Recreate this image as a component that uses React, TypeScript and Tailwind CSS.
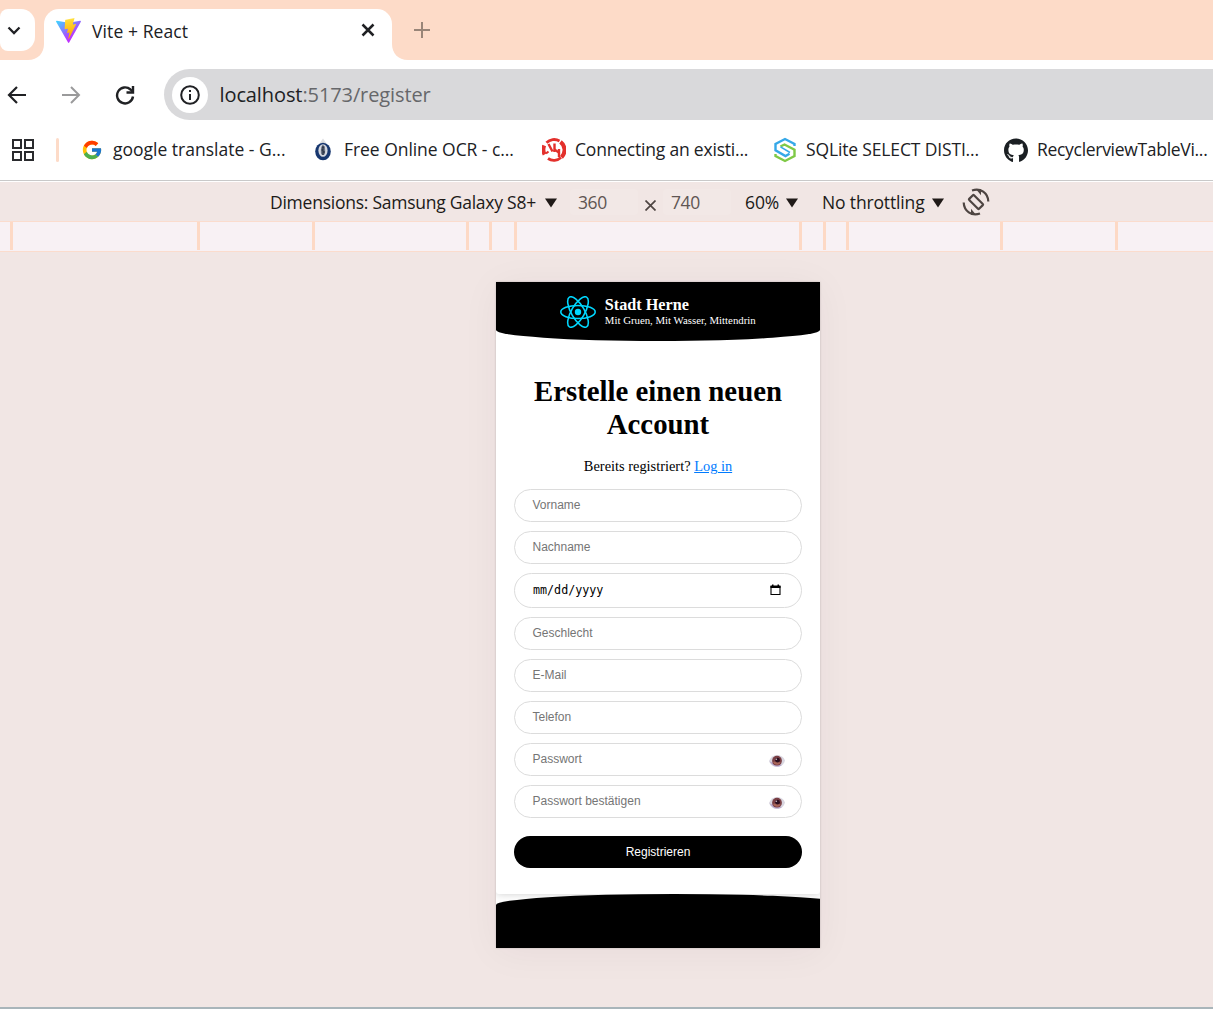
import React from "react";
import { FcGoogle } from "react-icons/fc";
import { FaGithub } from "react-icons/fa";

function ViteLogo() {
  return (
    <svg width="25" height="25" viewBox="0 0 256 257" className="block">
      <defs>
        <linearGradient id="va" x1="-.83%" x2="57.64%" y1="7.65%" y2="78.41%">
          <stop offset="0%" stopColor="#41D1FF" />
          <stop offset="100%" stopColor="#BD34FE" />
        </linearGradient>
        <linearGradient id="vb" x1="43.38%" x2="50.32%" y1="2.24%" y2="89.03%">
          <stop offset="0%" stopColor="#FFEA83" />
          <stop offset="8.33%" stopColor="#FFDD35" />
          <stop offset="100%" stopColor="#FFA800" />
        </linearGradient>
      </defs>
      <path fill="url(#va)" d="M255.153 37.938L134.897 252.976c-2.483 4.44-8.862 4.466-11.382.048L.875 37.958c-2.746-4.814 1.371-10.646 6.827-9.67l120.385 21.517a6.537 6.537 0 0 0 2.322-.004l117.867-21.483c5.438-.991 9.574 4.796 6.877 9.62Z" />
      <path fill="url(#vb)" d="M185.432.063L96.44 17.501a3.268 3.268 0 0 0-2.634 3.014l-5.474 92.456a3.268 3.268 0 0 0 3.997 3.378l24.777-5.718c2.318-.535 4.413 1.507 3.936 3.838l-7.361 36.047c-.495 2.426 1.782 4.5 4.151 3.78l15.304-4.649c2.372-.72 4.652 1.36 4.15 3.788l-11.698 56.621c-.732 3.542 3.979 5.473 5.943 2.437l1.313-2.028l72.516-144.72c1.215-2.423-.88-5.186-3.54-4.672l-25.505 4.922c-2.396.462-4.435-1.77-3.759-4.114l16.646-57.705c.677-2.35-1.37-4.583-3.769-4.113Z" />
    </svg>
  );
}

function ReactLogo() {
  return (
    <svg width="36" height="32" viewBox="-11.5 -10.23 23 20.46" className="block">
      <circle r="2.05" fill="#00d8ff" />
      <g fill="none" stroke="#00d8ff" strokeWidth="1">
        <ellipse rx="11" ry="4.2" />
        <ellipse rx="11" ry="4.2" transform="rotate(60)" />
        <ellipse rx="11" ry="4.2" transform="rotate(120)" />
      </g>
    </svg>
  );
}

function CrestIcon() {
  return (
    <svg width="24" height="24" viewBox="0 0 24 24" className="block">
      <path d="M12 .5l3.500 5h-7z" fill="#dfe0e2" />
      <ellipse cx="12" cy="13.500" rx="7.800" ry="8.800" fill="#17376f" />
      <ellipse cx="12" cy="12.500" rx="4.600" ry="6.300" fill="#d5d8df" />
      <path d="M12 6.500c-2 2-2.400 4-2 9 1 2 3 2 4 0 .6-4 0-7-2-9z" fill="#6d7586" />
      <path d="M11 9h2.500M10.500 12h2M12 14h2M12 9v8" stroke="#20283b" strokeWidth="1.100" />
    </svg>
  );
}

function RedIcon() {
  return (
    <svg width="24" height="24" viewBox="0 0 24 24" className="block" fill="none" stroke="#e3302c">
      <path d="M4.500 4.800A10.400 10.400 0 0 1 17.500 3" strokeWidth="2.800" />
      <path d="M18.500 3.800A10.300 10.300 0 0 1 19.500 19.300" strokeWidth="4" />
      <path d="M19 19.500A10.400 10.400 0 0 1 6 20.500" strokeWidth="2.800" />
      <path d="M2.200 7.500A10.600 10.600 0 0 0 2.600 16.500" strokeWidth="4" />
      <path d="M6.500 6l4 7.500M12.500 5.500v8.500M17 11v8" strokeWidth="2.400" />
      <path d="M12.500 11.500l5 3.500M4 15.500l2.500-2" strokeWidth="2.200" />
    </svg>
  );
}

function SqliteTutorialIcon() {
  return (
    <svg width="24" height="26" viewBox="0 0 24 26" className="block" fill="none" strokeWidth="2.400">
      <path d="M21.500 9V7L12 2 2.500 7v6.200L12.500 19l4-2.300" stroke="#35a8e8" />
      <path d="M2.500 17v2l9.500 5 9.500-5v-6.200L11.500 7.500l-4 2" stroke="#7fc946" />
      <path d="M7.500 9.800l9.500 5.700" stroke="#35a8e8" strokeWidth="1.500" />
    </svg>
  );
}

function EyeIcon() {
  return (
    <svg width="16" height="12" viewBox="0 0 16 12" className="block">
      <path d="M0 6C1.500 2 4.500 0 8 0s6.700 1.900 8 5.500C14.800 10 11.500 12 8 12S1.500 10 0 6z" fill="#d9d6e0" />
      <path d="M.6 6.500c1.800 3 4.400 5 7.400 5 2 0 3.500-.6 4.800-1.600L5 8z" fill="#b7a6cb" />
      <circle cx="8" cy="5.700" r="4.900" fill="#7a3f44" />
      <path d="M4 7a4.400 4.400 0 0 0 7.800.8L8 6z" fill="#a9665a" />
      <circle cx="8.500" cy="5.200" r="2.400" fill="#2d0f20" />
      <circle cx="7.300" cy="4.200" r=".8" fill="#cfc0c8" />
    </svg>
  );
}

function RotateIcon() {
  return (
    <svg width="28" height="28" viewBox="0 0 28 28" className="ml-[18px] block shrink-0" fill="none" stroke="#4e4542" strokeWidth="2.200">
      <rect x="10.600" y="7" width="6.800" height="14" rx=".8" transform="rotate(-45 14 14)" />
      <path d="M10 2.500C18.500-.5 26 5 26.300 13.500" />
      <path d="M18 25.500C9.500 28.500 2 23 1.700 14.500" />
      <path d="M14 1.200h5v6z M14 26.800H9v-6z" fill="#4e4542" stroke="none" />
    </svg>
  );
}

function Bookmark({ icon, label, className, textClass }: { icon: React.ReactNode; label: string; className: string; textClass: string }) {
  return (
    <div className={`flex h-full shrink-0 items-center whitespace-nowrap text-[17.5px] text-[#202124] ${className}`}>
      <span className="flex w-6 shrink-0 justify-center">{icon}</span>
      <span className={`-mt-px ${textClass}`}>{label}</span>
    </div>
  );
}

function Field({ label, eye }: { label: string; eye?: boolean }) {
  return (
    <div className="flex h-[33px] items-center justify-between rounded-full border border-[#dcdcdc] pr-4 pl-[17.5px] font-['Liberation_Sans',sans-serif] text-[12px] text-[#757575]">
      <span className="-mt-px">{label}</span>
      {eye && <span className="mt-[2px]"><EyeIcon /></span>}
    </div>
  );
}

function Caret() {
  return (
    <svg width="12" height="10" viewBox="0 0 12 10" className="mt-[2px] block shrink-0">
      <path d="M0 .5h12L6 9.500z" fill="#201a18" />
    </svg>
  );
}

const segments = [13, 187, 115, 154, 23, 25, 285, 24, 23, 154, 115];

export default function App() {
  return (
    <div className="flex h-[1009px] w-[1213px] flex-col overflow-hidden bg-white font-['Open_Sans',sans-serif]">
      {/* Tab strip */}
      <div className="flex h-[60px] shrink-0 items-start bg-[#fddbc8]">
        <div className="mt-[9px] flex h-[42px] w-[35px] items-center rounded-r-[14px] rounded-l-[8px] bg-white pl-[7px]">
          <svg width="14" height="14" viewBox="0 0 14 14" fill="none" stroke="#202124" strokeWidth="2.300"><path d="M1.500 4.500L7 10l5.500-5.500" /></svg>
        </div>
        <svg width="16" height="60" viewBox="0 0 16 60" className="-ml-[7px] block"><path d="M16 44v16H0C10 60 16 53 16 44z" fill="#fff" /></svg>
        <div className="mt-[9px] flex h-[51px] w-[348px] items-center rounded-t-[15px] bg-white pr-[17px] pl-[11.500px]">
          <div className="-mt-[9px]"><ViteLogo /></div>
          <span className="-mt-[6px] ml-[11.500px] text-[17.5px] tracking-[0.1px] whitespace-nowrap text-[#202124]">Vite + React</span>
          <svg width="14" height="14" viewBox="0 0 14 14" className="-mt-[9px] ml-auto" stroke="#202124" strokeWidth="2.500"><path d="M1.500 1.500l11 11M12.500 1.500l-11 11" /></svg>
        </div>
        <svg width="16" height="60" viewBox="0 0 16 60" className="block"><path d="M0 44v16h16C6 60 0 53 0 44z" fill="#fff" /></svg>
        <svg width="16" height="16" viewBox="0 0 16 16" className="mt-[22px] ml-[6px]" stroke="#998578" strokeWidth="2"><path d="M8 0v16M0 8h16" /></svg>
      </div>

      {/* Address bar */}
      <div className="flex h-[60px] shrink-0 items-end">
        <div className="flex h-[51px] w-[164px] shrink-0 items-center">
          <svg width="20" height="20" viewBox="0 0 20 20" className="ml-[7px]" fill="none" stroke="#202124" strokeWidth="2.200"><path d="M19 10H2.500M10 2l-8 8 8 8" /></svg>
          <svg width="20" height="20" viewBox="0 0 20 20" className="ml-[34px]" fill="none" stroke="#9a9a9b" strokeWidth="2"><path d="M1 10h16.500M10 2l8 8-8 8" /></svg>
          <svg width="20" height="20" viewBox="0 0 20 20" className="ml-[34px]" fill="none" stroke="#202124" strokeWidth="2.400"><path d="M18 11.500a8 8 0 1 1-2.500-7L18 7" /><path d="M18 1v6.500h-6.500" /></svg>
        </div>
        <div className="flex h-[51px] flex-1 items-center rounded-l-full bg-[#d9d9db] pl-[7.500px]">
          <div className="flex size-[36px] items-center justify-center rounded-full bg-white">
            <svg width="20" height="20" viewBox="0 0 20 20" fill="none" stroke="#202124" strokeWidth="2"><circle cx="10" cy="10" r="8.800" /><path d="M10 9v6M10 5v2" /></svg>
          </div>
          <span className="ml-[12px] text-[20px] tracking-[-0.1px] whitespace-nowrap text-[#66676a]"><span className="text-[#202124]">localhost</span>:5173/register</span>
        </div>
      </div>

      {/* Bookmarks */}
      <div className="flex h-[61px] shrink-0 items-center overflow-hidden border-b border-[#c9c9c9]">
        <div className="ml-3 grid shrink-0 grid-cols-2 gap-[2px]">
          {[0, 1, 2, 3].map((i) => <span key={i} className="size-[10px] border-[2.5px] border-[#2a2b2e]" />)}
        </div>
        <div className="ml-[22px] h-6 w-[3px] shrink-0 rounded-full bg-[#fddbc8]" />
        <Bookmark icon={<FcGoogle size={22} />} label="google translate - G..." className="ml-[21px] w-[231px]" textClass="ml-[9px]" />
        <Bookmark icon={<CrestIcon />} label="Free Online OCR - c..." className="w-[231px]" textClass="ml-[9px] tracking-[-0.05px]" />
        <Bookmark icon={<RedIcon />} label="Connecting an existi..." className="w-[231px]" textClass="ml-[9px] tracking-[-0.2px]" />
        <Bookmark icon={<SqliteTutorialIcon />} label="SQLite SELECT DISTI..." className="w-[231px]" textClass="ml-[9px] tracking-[-0.15px]" />
        <Bookmark icon={<FaGithub size={25} color="#1b1f23" />} label="RecyclerviewTableVi..." className="w-[220px]" textClass="ml-[9px] tracking-[-0.3px]" />
      </div>

      {/* Device toolbar */}
      <div className="flex h-[40px] shrink-0 items-center border-t border-white bg-[#f1e6e4] pt-px pl-[270px] text-[17.5px] whitespace-nowrap text-[#201a18]">
        <span className="w-[275px] shrink-0 tracking-[-0.25px]">Dimensions: Samsung Galaxy S8+</span>
        <Caret />
        <span className="ml-[13px] flex h-[26px] w-[68px] items-center rounded bg-[#f2e8e6] pl-2 tracking-[-0.4px] text-[#5f5653]">360</span>
        <svg width="11" height="11" viewBox="0 0 11 11" className="mt-[6px] ml-[7px] shrink-0" stroke="#4e4542" strokeWidth="1.700"><path d="M.5.5l10 10M10.500.5l-10 10" /></svg>
        <span className="ml-[7px] flex h-[26px] w-[68px] items-center rounded bg-[#f2e8e6] pl-2 tracking-[-0.4px] text-[#5f5653]">740</span>
        <span className="ml-[14px] w-[41px] shrink-0 tracking-[-0.1px]">60%</span>
        <Caret />
        <span className="ml-6 w-[110px] shrink-0 tracking-[-0.15px]">No throttling</span>
        <Caret />
        <RotateIcon />
      </div>

      {/* Breakpoint ruler */}
      <div className="flex h-[31px] shrink-0 border-y border-[#fbdccd] bg-[#f8f1f4] pb-px">
        {segments.map((w, i) => (
          <div key={i} className="shrink-0 border-r-[3px] border-[#fdd9c5]" style={{ width: w }} />
        ))}
      </div>

      {/* Emulated device */}
      <div className="flex flex-1 justify-center border-b-2 border-[#a9b5ba] bg-[#f1e6e4] pt-[30px] pl-[103px]">
        <div className="flex h-[666px] w-[324px] flex-col overflow-hidden bg-white shadow-[0_0_2px_rgba(0,0,0,0.2),0_4px_36px_rgba(60,20,60,0.05)]">
          <div className="relative flex flex-1 flex-col rounded-b-[3px] bg-white shadow-[0_0_9px_rgba(0,0,0,0.2)]">
            <header className="flex h-[59px] shrink-0 items-center justify-center bg-black text-white [border-bottom-left-radius:50%_11px] [border-bottom-right-radius:50%_11px]">
              <ReactLogo />
              <div className="ml-[8.5px] font-['Liberation_Serif',serif]">
                <div className="text-[16.2px] leading-[17px] font-bold">Stadt Herne</div>
                <div className="text-[10.8px] leading-[13px]">Mit Gruen, Mit Wasser, Mittendrin</div>
              </div>
            </header>
            <main className="flex flex-col px-[18px] pt-[34px]">
              <h1 className="text-center font-['Liberation_Serif',serif] text-[28.8px] leading-[33px] font-bold text-black">Erstelle einen neuen Account</h1>
              <p className="mt-[17px] text-center font-['Liberation_Serif',serif] text-[14.4px] leading-4 text-black">
                Bereits registriert? <a className="text-[#007bff] underline">Log in</a>
              </p>
              <form className="mt-[15px] flex flex-col gap-[9px]">
                <Field label="Vorname" />
                <Field label="Nachname" />
                <div className="flex h-[35px] items-center justify-between rounded-full border border-[#dcdcdc] pr-5 pl-[18px] font-['DejaVu_Sans_Mono',monospace] text-[11.7px] text-black">
                  <span>mm/dd/yyyy</span>
                  <svg width="11" height="12" viewBox="0 0 11 12" className="-mt-px"><path d="M.5 1.500h10V4H.5zM2 .5h1.500V2H2zM7.500.5H9V2H7.500z" fill="#000" /><path d="M1 2.500h9v8H1z" fill="none" stroke="#000" strokeWidth="1.100" /></svg>
                </div>
                <Field label="Geschlecht" />
                <Field label="E-Mail" />
                <Field label="Telefon" />
                <Field label="Passwort" eye />
                <Field label="Passwort bestätigen" eye />
                <button type="button" className="mt-[9px] h-[31.5px] rounded-full bg-black font-['Liberation_Sans',sans-serif] text-[12px] text-white">Registrieren</button>
              </form>
            </main>
          </div>
          <footer className="relative h-[54px] w-[356px] shrink-0 bg-black [border-top-left-radius:50%_11px] [border-top-right-radius:50%_11px]" />
        </div>
      </div>
    </div>
  );
}
